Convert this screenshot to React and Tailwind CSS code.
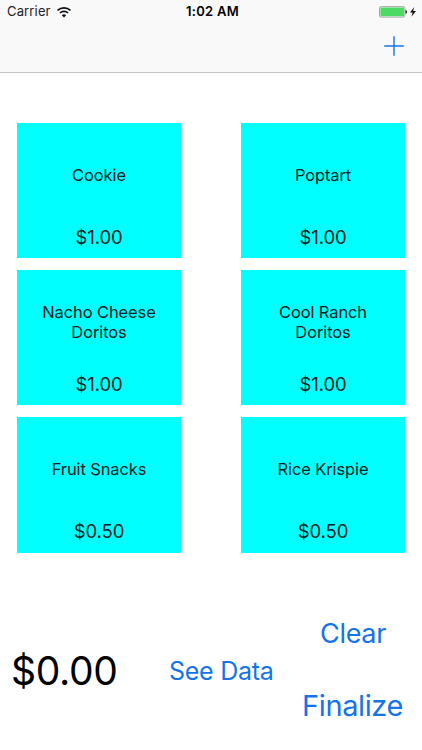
import React from 'react';

const items = [
  { name: 'Cookie', price: 1 },
  { name: 'Poptart', price: 1 },
  { name: 'Nacho Cheese Doritos', price: 1 },
  { name: 'Cool Ranch Doritos', price: 1 },
  { name: 'Fruit Snacks', price: 0.5 },
  { name: 'Rice Krispie', price: 0.5 },
];

const formatPrice = (value) => `$${value.toFixed(2)}`;

const WifiIcon = () => (
  <svg className="h-[11px] w-[14px]" viewBox="0 0 14 11" fill="none">
    <path d="M0.5 3.5C4.1 0 9.9 0 13.5 3.5" stroke="#111" strokeWidth="1.7" />
    <path d="M2.9 6C5 3.8 9 3.8 11.1 6" stroke="#111" strokeWidth="1.6" />
    <path d="M7 10.4L4.8 8.2C6.1 6.9 7.9 6.9 9.2 8.2Z" fill="#111" />
  </svg>
);

const BatteryIcon = () => (
  <svg className="h-[12px] w-[38px]" viewBox="0 0 38 12">
    <rect x="0.5" y="0.7" width="25.4" height="10.4" rx="1.4" fill="#fff" stroke="#a3a3a3" />
    <rect x="1.4" y="1.6" width="23.6" height="8.6" rx="0.5" fill="#4cd964" />
    <path d="M26.8 4.2C28 4.4 28 7.4 26.8 7.6Z" fill="#111" stroke="#111" strokeWidth="0.5" />
    <path d="M35.2 1L31 6.6H33.6L32.4 10.8L37 5.1H34.1Z" fill="#111" />
  </svg>
);

const ItemTile = ({ item }) => (
  <button className="flex h-[135.5px] w-[164px] flex-col items-center bg-[#00ffff] text-[#062424]">
    <span className="flex h-[103px] w-[130px] items-center justify-center pt-[3px] text-center text-[16.5px] leading-[19.5px] tracking-[-0.12px]">
      {item.name}
    </span>
    <span className="text-[18.5px] leading-[22px] tracking-[-0.1px]">{formatPrice(item.price)}</span>
  </button>
);

const App = () => {
  return (
    <div className="flex h-[750px] w-[422px] flex-col overflow-hidden bg-white font-['Inter',sans-serif] text-black">
      {/* Status bar and navigation bar */}
      <header className="h-[73px] border-b border-[#c4c4c6] bg-[#f9f9f9]">
        <div className="grid h-[23px] grid-cols-3 items-center pl-[7px] pr-[5px] text-[13px]">
          <div className="flex items-center gap-[6px] pt-px text-[#222]">
            <span className="tracking-[0.15px]">Carrier</span>
            <WifiIcon />
          </div>
          <span className="pl-px pt-px text-center font-semibold tracking-[0.3px]">1:02 AM</span>
          <div className="flex justify-end">
            <BatteryIcon />
          </div>
        </div>
        <div className="flex justify-end pr-[18px] pt-[13px]">
          <button aria-label="Add item">
            <svg className="h-5 w-5" viewBox="0 0 20 20">
              <path d="M0.2 10H19.8M10 0.2V19.8" stroke="#1a73e8" strokeWidth="1.4" />
            </svg>
          </button>
        </div>
      </header>

      {/* Items */}
      <main className="grid grid-cols-[164px_164px] justify-between gap-y-[11.7px] px-[17px] pt-[49.7px]">
        {items.map((item) => (
          <ItemTile key={item.name} item={item} />
        ))}
      </main>

      {/* Total and actions */}
      <footer className="mb-[14px] mt-auto flex h-[134px] items-center pl-[11px] pr-[19px]">
        <span className="w-[158px] pt-[4px] text-[39px] leading-[48px] tracking-[-0.3px]">{formatPrice(0)}</span>
        <button className="pt-[3px] text-[25px] leading-[30px] tracking-[-0.25px] text-[#1573ea]">See Data</button>
        <div className="ml-auto flex flex-col items-center gap-[36px] pt-[2px] text-[#1573ea]">
          <button className="pl-[1px] text-[27px] leading-[36px] tracking-[-0.3px]">Clear</button>
          <button className="text-[29px] leading-[36px] tracking-[-0.4px]">Finalize</button>
        </div>
      </footer>
    </div>
  );
};

export default App;
